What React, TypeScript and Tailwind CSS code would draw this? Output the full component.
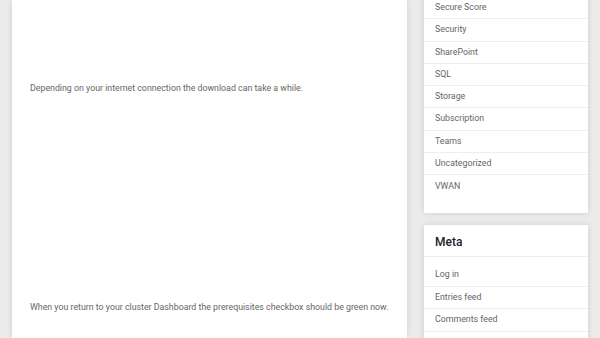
const categories = [
  'Secure Score',
  'Security',
  'SharePoint',
  'SQL',
  'Storage',
  'Subscription',
  'Teams',
  'Uncategorized',
  'VWAN',
]

const meta = ['Log in', 'Entries feed', 'Comments feed', 'WordPress.org']

export default function App() {
  return (
    <div className="h-[338px] w-[600px] overflow-hidden bg-[#ebebeb] font-['Roboto',sans-serif]">
      <div className="flex gap-[17px] pl-[12px] pr-[12px]">
        {/* Post body */}
        <main className="h-[338px] w-[395px] bg-white shadow-[0_0_6px_rgba(0,0,0,0.12)] px-[18px]">
          <p className="pt-[81px] text-[8.8px] leading-[14px] text-[#666] whitespace-nowrap">
            Depending on your internet connection the download can take a while.
          </p>
          <p className="pt-[205px] text-[8.8px] leading-[14px] text-[#666] whitespace-nowrap">
            When you return to your cluster Dashboard the prerequisites checkbox should be green now.
          </p>
        </main>

        {/* Sidebar */}
        <aside className="flex w-[164px] flex-col gap-[12px] -mt-[3px]">
          <div className="bg-white shadow-[0_0_6px_rgba(0,0,0,0.12)] pb-[16px]">
            <ul>
              {categories.map(c => (
                <li
                  key={c}
                  className="h-[22.25px] flex items-center border-b border-[#eeeeee] last:border-b-0 px-[11px] text-[8.8px] text-[#666]"
                >
                  {c}
                </li>
              ))}
            </ul>
          </div>

          <div className="bg-white shadow-[0_0_6px_rgba(0,0,0,0.12)]">
            <h3 className="h-[32px] pt-[2px] flex items-center border-b border-[#eeeeee] px-[11px] text-[12px] font-medium text-[#222]">
              Meta
            </h3>
            <ul className="pt-[7px]">
              {meta.map(m => (
                <li
                  key={m}
                  className="h-[22.5px] flex items-center border-b border-[#eeeeee] px-[11px] text-[8.8px] text-[#666]"
                >
                  {m}
                </li>
              ))}
            </ul>
          </div>
        </aside>
      </div>
    </div>
  )
}
